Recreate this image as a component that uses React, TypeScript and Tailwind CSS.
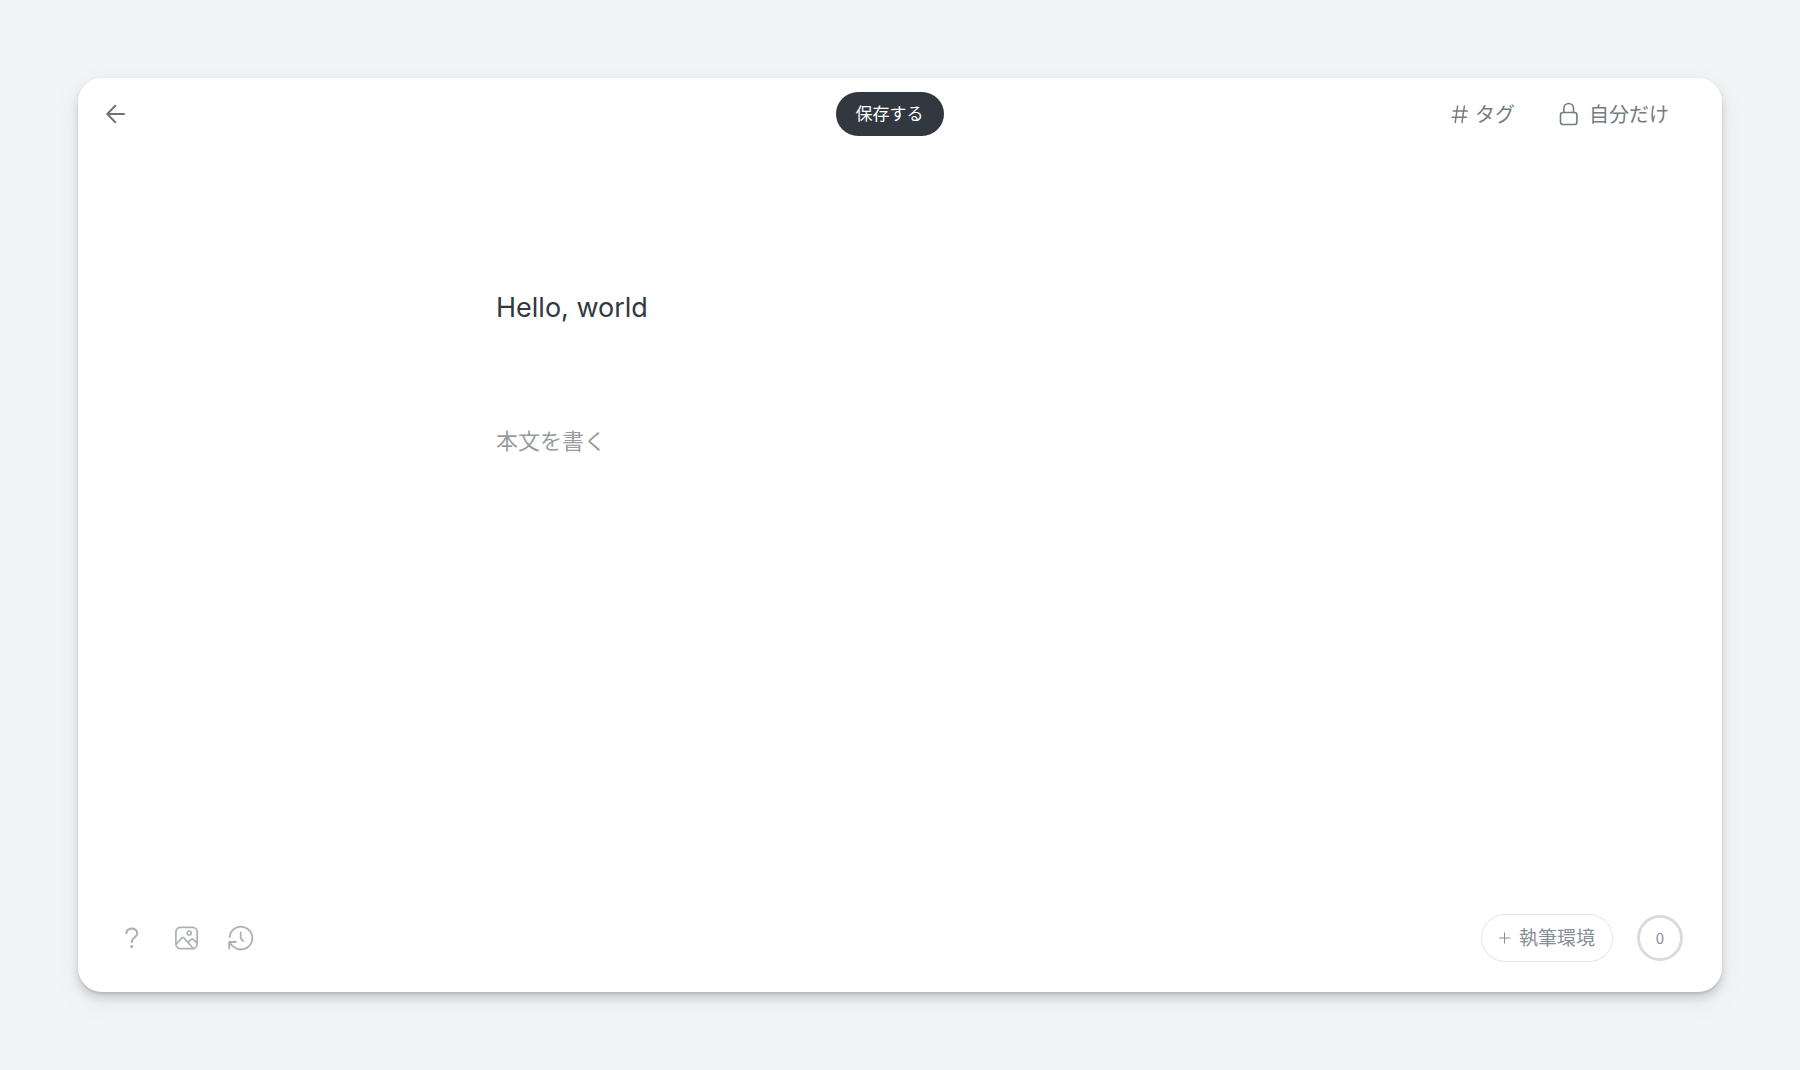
import React, { useState } from 'react';

const strokeProps = {
  fill: 'none',
  stroke: 'currentColor',
  strokeLinecap: 'round' as const,
  strokeLinejoin: 'round' as const,
};

const BackIcon = () => (
  <svg width="20" height="20" viewBox="0 0 20 20" strokeWidth="2" {...strokeProps} aria-hidden="true">
    <path d="M18 10H1.5M9.3 1.8L1.3 10l8 8.2" />
  </svg>
);

const HashIcon = () => (
  <svg width="18" height="20" viewBox="0 0 18 20" strokeWidth="1.5" {...strokeProps} aria-hidden="true">
    <path d="M2.2 7h14.2M1.2 13.3h14.2M6.600 2l-2.400 16.500M13.400 2l-2.400 16.500" />
  </svg>
);

const LockIcon = () => (
  <svg width="20" height="24" viewBox="0 0 20 24" strokeWidth="1.6" {...strokeProps} aria-hidden="true">
    <rect x="1.5" y="10.500" width="16.400" height="12" rx="2.400" />
    <path d="M4.900 10.500V6.300a4.800 4.800 0 0 1 9.600 0v4.200" />
  </svg>
);

const HelpIcon = () => (
  <svg width="24" height="22" viewBox="-5 0 24 22" strokeWidth="2.1" {...strokeProps} aria-hidden="true">
    <path d="M1.400 6.300C1.400 3.400 3.700 1.600 6.700 1.600s5.500 1.800 5.500 4.600c0 2.100-1.300 3.200-2.800 4.300C7.800 11.700 6.700 12.600 6.700 15" />
    <circle cx="6.700" cy="19.600" r="1.600" fill="currentColor" stroke="none" />
  </svg>
);

const ImageIcon = () => (
  <svg width="24" height="24" viewBox="0 0 24 24" strokeWidth="1.7" {...strokeProps} aria-hidden="true">
    <rect x="1.900" y="1.300" width="21.200" height="21.400" rx="4.600" />
    <circle cx="15.200" cy="7" r="2" />
    <path d="M2.200 18.200l5.600-6.300a1.400 1.400 0 0 1 2.100 0l9.400 10.600M14.100 16.200l2.700-2.600a1.900 1.900 0 0 1 2.700 0l3.300 3.300" />
  </svg>
);

const HistoryIcon = () => (
  <svg width="26" height="26" viewBox="0 0 26 26" strokeWidth="1.8" {...strokeProps} aria-hidden="true">
    <path d="M1.600 12.100A11.400 11.400 0 1 1 7 22.800M7.900 17H1.200v6.600M1.500 17.300c1.500 2.500 3.400 4.300 5.500 5.500M12.700 7.500v5.800l2.600 2.800" />
  </svg>
);

const PlusIcon = () => (
  <svg width="12" height="12" viewBox="0 0 12 12" strokeWidth="1" {...strokeProps} aria-hidden="true">
    <path d="M5.500 .8v10.400M.5 6h10.400" />
  </svg>
);

const App = () => {
  const [title, setTitle] = useState('Hello, world');
  const [body, setBody] = useState('');

  const tools = [
    { label: 'ヘルプ', icon: <HelpIcon /> },
    { label: '画像', icon: <ImageIcon /> },
    { label: '履歴', icon: <HistoryIcon /> },
  ];

  return (
    <div className="flex min-h-screen flex-col bg-[#f2f4f6] p-[78px] font-['Inter','Noto_Sans_CJK_JP',sans-serif]">
      <div className="flex flex-1 flex-col rounded-3xl bg-white shadow-[0_2px_2px_rgba(0,0,0,0.10),0_6px_10px_rgba(0,0,0,0.14),0_8px_32px_rgba(0,0,0,0.06)]">
        {/* Header */}
        <header className="grid grid-cols-[1fr_auto_1fr] items-center pt-3.5 pr-[49px] pl-7 text-[#6c757d]">
          <button type="button" aria-label="戻る" className="justify-self-start">
            <BackIcon />
          </button>
          <button type="button" className="h-11 rounded-full bg-[#32383f] px-5 pt-0.5 text-[17px] text-white">
            保存する
          </button>
          <div className="flex items-center gap-11 justify-self-end pr-1 text-xl text-[#747c80]">
            <button type="button" className="flex items-center gap-1.5">
              <HashIcon />
              <span className="pt-0.5">タグ</span>
            </button>
            <button type="button" className="flex items-center gap-2.5">
              <LockIcon />
              <span className="pt-0.5">自分だけ</span>
            </button>
          </div>
        </header>

        {/* Editor */}
        <main className="mx-auto flex w-full max-w-[808px] flex-1 flex-col pt-[149px]">
          <input
            type="text"
            aria-label="タイトル"
            value={title}
            onChange={(e) => setTitle(e.target.value)}
            className="h-11 text-[27px] text-[#32383f] outline-none"
          />
          <textarea
            aria-label="本文"
            placeholder="本文を書く"
            value={body}
            onChange={(e) => setBody(e.target.value)}
            className="mt-24 flex-1 resize-none text-[22px] leading-8 text-[#32383f] outline-none placeholder:text-[#999c9f]"
          />
        </main>

        {/* Toolbar */}
        <footer className="flex items-center justify-between pr-[39px] pb-[30px] pl-[42px]">
          <div className="flex items-center gap-[30px] text-[#adb1b6]">
            {tools.map((tool) => (
              <button key={tool.label} type="button" aria-label={tool.label}>
                {tool.icon}
              </button>
            ))}
          </div>
          <div className="flex items-center gap-6 text-[#868e96]">
            <button
              type="button"
              className="flex h-12 items-center gap-2 rounded-full border border-[#e2e4e7] px-[17px] text-[19px]"
            >
              <PlusIcon />
              <span className="pt-0.5">執筆環境</span>
            </button>
            <button
              type="button"
              aria-label="文字数"
              className="flex size-[46px] items-center justify-center rounded-full border-3 border-[#d9dbdf] font-['Noto_Sans_CJK_JP',sans-serif] text-[15px]"
            >
              {body.length}
            </button>
          </div>
        </footer>
      </div>
    </div>
  );
};

export default App;
